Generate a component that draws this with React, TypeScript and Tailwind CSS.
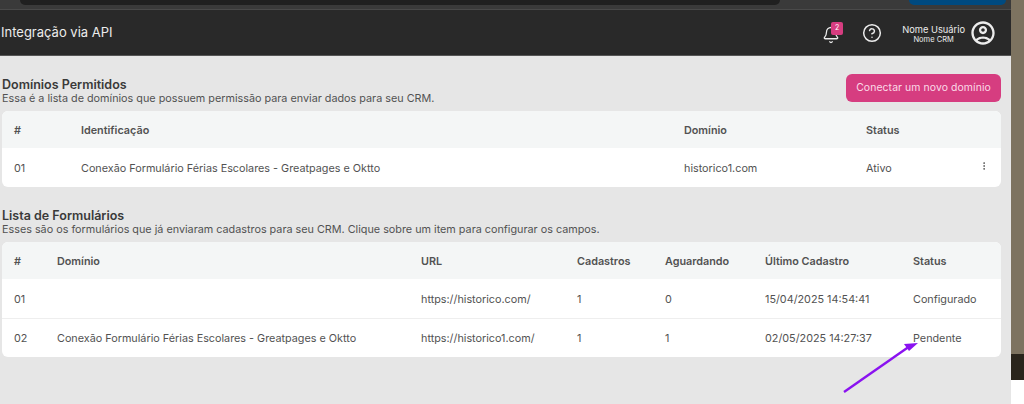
import { Bell, CircleHelp, MoreVertical } from 'lucide-react'
import { MdOutlineAccountCircle } from 'react-icons/md'

const f1 = [
  { id: '01', nome: '', url: 'https://historico.com/', cad: '1', ag: '0', ult: '15/04/2025 14:54:41', st: 'Configurado', pad: 'pt-[4px]' },
  { id: '02', nome: 'Conexão Formulário Férias Escolares - Greatpages e Oktto', url: 'https://historico1.com/', cad: '1', ag: '1', ult: '02/05/2025 14:27:37', st: 'Pendente', pad: 'pt-[2px] border-t border-[#eeeeee]' },
]

export default function App() {
  return (
    <div className="w-[1024px] h-[404px] overflow-hidden flex font-['Inter',sans-serif] bg-[#e6e6e6] text-[#525252]">
      <div className="w-[1011px] flex flex-col shrink-0">
        {/* browser chrome leftover */}
        <div className="h-[10px] shrink-0 bg-[#3a3a3a] border-b border-[#4a4a4a] flex justify-between">
          <div className="ml-[20px] w-[760px] h-[5px] bg-[#202020] rounded-b-lg" />
          <div className="mr-[5px] w-[97px] h-[5px] bg-[#004a80] rounded-b-lg" />
        </div>

        <header className="h-[46px] shrink-0 bg-[#292929] border-b border-[#555] flex items-center pl-[1px] pr-[14px] text-[#ececec]">
          <span className="text-[13px] leading-none">Integração via API</span>
          <div className="ml-auto relative mr-[22px] mt-[4px]">
            <Bell size={18} strokeWidth={1.7} />
            <span className="absolute -top-[4px] left-[9px] w-[12px] h-[13px] rounded-[2px] bg-[#d63d80] text-white text-[7px] flex items-center justify-center">2</span>
          </div>
          <CircleHelp size={20} strokeWidth={1.8} className="mr-[20px]" />
          <div className="flex flex-col items-center mr-[4px] mt-[4px]">
            <span className="text-[9.3px] leading-[11px]">Nome Usuário</span>
            <span className="text-[7.5px] leading-[10px]">Nome CRM</span>
          </div>
          <MdOutlineAccountCircle size={28} />
        </header>

        <main className="flex flex-col pl-[2px] pr-[10px]">
          <div className="flex items-start justify-between mt-[18px] h-[30px]">
            <div className="pt-[3px]">
              <h2 className="text-[12.5px] leading-[15px] font-semibold text-[#3a3a3a]">Domínios Permitidos</h2>
              <p className="text-[10.8px] leading-[14px]">Essa é a lista de domínios que possuem permissão para enviar dados para seu CRM.</p>
            </div>
            <button className="w-[155px] h-[28px] rounded-md bg-[#d63d80] text-[#fbdbe8] text-[10.4px] tracking-[0.1px]">Conectar um novo domínio</button>
          </div>

          <div className="mt-[7px] rounded-md bg-white overflow-hidden text-[10.8px]">
            <div className="h-[37px] bg-[#f4f6f6] flex items-center font-semibold pt-[3px]">
              <span className="pl-[12px] w-[79px]">#</span>
              <span className="w-[603px]">Identificação</span>
              <span className="w-[182px]">Domínio</span>
              <span>Status</span>
            </div>
            <div className="h-[39px] flex items-center relative pt-[3px]">
              <span className="pl-[12px] w-[79px]">01</span>
              <span className="w-[603px]">Conexão Formulário Férias Escolares - Greatpages e Oktto</span>
              <span className="w-[182px]">historico1.com</span>
              <span>Ativo</span>
              <MoreVertical size={10} className="absolute right-[12px] top-[13px]" />
            </div>
          </div>

          <h2 className="mt-[21px] text-[12.5px] leading-[15px] font-semibold text-[#3a3a3a]">Lista de Formulários</h2>
          <p className="text-[10.8px] leading-[14px]">Esses são os formulários que já enviaram cadastros para seu CRM. Clique sobre um item para configurar os campos.</p>

          <div className="mt-[5px] rounded-md bg-white overflow-hidden text-[10.8px]">
            <div className="h-[37px] bg-[#f4f6f6] flex items-center font-semibold pt-[3px]">
              <span className="pl-[12px] w-[55px]">#</span>
              <span className="w-[364px]">Domínio</span>
              <span className="w-[156px]">URL</span>
              <span className="w-[88px]">Cadastros</span>
              <span className="w-[100px]">Aguardando</span>
              <span className="w-[148px]">Último Cadastro</span>
              <span>Status</span>
            </div>
            {f1.map((r) => (
              <div key={r.id} className={`h-[39px] flex items-center ${r.pad}`}>
                <span className="pl-[12px] w-[55px]">{r.id}</span>
                <span className="w-[364px]">{r.nome}</span>
                <span className="w-[156px]">{r.url}</span>
                <span className="w-[88px]">{r.cad}</span>
                <span className="w-[100px]">{r.ag}</span>
                <span className="w-[148px]">{r.ult}</span>
                <span>{r.st}</span>
              </div>
            ))}
          </div>
        </main>
      </div>

      {/* faixa da direita */}
      <div className="flex-1 flex flex-col">
        <div className="h-[354px] bg-[#7d7360]" />
        <div className="h-[26px] bg-[#2a251c]" />
        <div className="flex-1 bg-white" />
      </div>

      {/* seta roxa da anotação */}
      <svg className="absolute left-[840px] top-[340px]" width="80" height="60" viewBox="0 0 80 60">
        <path d="M4 52 L70 6" stroke="#8a12f0" strokeWidth="2.4" fill="none" />
        <path d="M78 3 L64 4 L69 11 Z" fill="#8a12f0" />
      </svg>
    </div>
  )
}
